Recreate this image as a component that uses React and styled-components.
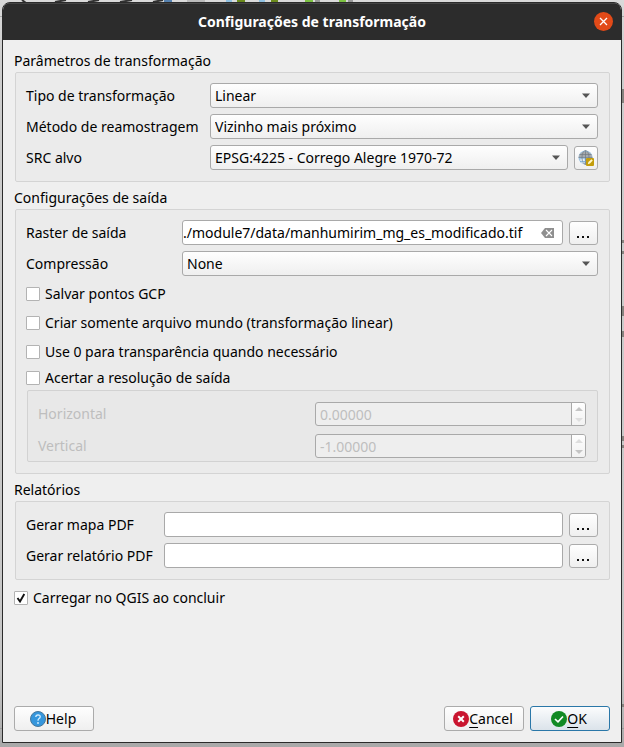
import React, { useEffect, useRef } from "react";
import styled, { createGlobalStyle, css } from "styled-components";

const GlobalStyle = createGlobalStyle`
  *, *::before, *::after { box-sizing: border-box; }
  body { margin: 0; background: #c9c9c9; }
  body, input, select, button {
    font-family: "Noto Sans", "Open Sans", sans-serif;
    font-size: 14px;
    line-height: 20px;
    color: #000;
  }
`;

const Desktop = styled.div`
  position: relative;
  display: flex;
  min-height: 100vh;
  padding: 2px 2px 4px;
  background: linear-gradient(#dadada 0, #cdcdcd 60px, #c6c6c6 90%, #a9a9a9 100%);
`;

const Backdrop = styled.svg`
  position: absolute;
  inset: 0;
  width: 100%;
  height: 100%;
`;

const Dialog = styled.main`
  position: relative;
  flex: 1;
  min-width: 0;
  display: flex;
  flex-direction: column;
  border: 1px solid #2b2b2b;
  border-radius: 8px 8px 0 0;
  background: #efefef;
  overflow: hidden;
`;

const TitleBar = styled.header`
  display: grid;
  grid-template-columns: 1fr auto 1fr;
  align-items: center;
  height: 37px;
  padding: 0 8px;
  background: #2c2c2c;
  border-top: 1px solid #444;
`;

const Title = styled.h1`
  grid-column: 2;
  margin: 0;
  font-size: 14px;
  line-height: 20px;
  font-weight: 700;
  color: #fff;
`;

const CloseButton = styled.button`
  justify-self: end;
  display: grid;
  place-items: center;
  width: 19px;
  height: 19px;
  margin-bottom: 2px;
  padding: 0;
  border: 0;
  border-radius: 50%;
  background: #e24a18;
`;

const Form = styled.form`
  flex: 1;
  display: flex;
  flex-direction: column;
  padding: 11px 11px;
`;

const Section = styled.section`
  margin-bottom: 6px;
`;

const SectionTitle = styled.h2`
  margin: 0;
  font-size: 14px;
  line-height: 20px;
  font-weight: 400;
`;

const Group = styled.div`
  display: flex;
  flex-direction: column;
  gap: 6px;
  margin: 1px 0 0 1px;
  padding: 10px 11px 11px 10px;
  border: 1px solid #d4d4d4;
  border-radius: 2px;
  background: #ebebeb;
`;

const Row = styled.div`
  display: grid;
  grid-template-columns: ${(p) => p.$label}px minmax(0, 1fr) auto;
  align-items: center;
  min-height: 25px;
`;

const fieldFrame = css`
  width: 100%;
  height: 25px;
  margin: 0;
  border: 1px solid #a9a9a9;
  border-radius: 3px;
`;

const SelectFrame = styled.div`
  display: grid;
  grid-template-columns: minmax(0, 1fr) 16px;
  align-items: center;
`;

const Select = styled.select`
  ${fieldFrame}
  grid-area: 1 / 1 / 2 / 3;
  appearance: none;
  padding: 0 20px 0 4px;
  background: linear-gradient(#fefefe, #efefef);
`;

const Arrow = styled.svg`
  grid-area: 1 / 2;
  z-index: 1;
  width: 8px;
  height: 5px;
  pointer-events: none;
`;

const InputFrame = styled.div`
  ${fieldFrame}
  display: flex;
  align-items: center;
  background: #fff;
  overflow: hidden;
`;

const TextInput = styled.input`
  flex: 1;
  min-width: 0;
  height: 23px;
  padding: 0;
  border: 0;
  background: transparent;
  outline: 0;
`;

const ClearButton = styled.button`
  display: flex;
  margin: 0 8px;
  padding: 0;
  border: 0;
  background: none;
`;

const SmallButton = styled.button`
  display: grid;
  place-items: center;
  width: ${(p) => p.$width}px;
  height: 24px;
  margin-left: 6px;
  padding: 0;
  border: 1px solid #ababab;
  border-radius: 3px;
  background: linear-gradient(#fefefe, #efefef);
`;

const Checks = styled.div`
  display: flex;
  flex-direction: column;
  gap: 9px;
  padding-top: 2px;
`;

const CheckLabel = styled.label`
  display: flex;
  align-items: center;
  gap: 5px;
`;

const CheckCell = styled.span`
  display: grid;
  place-items: center;
`;

const CheckInput = styled.input`
  grid-area: 1 / 1;
  appearance: none;
  width: 14px;
  height: 14px;
  margin: 0;
  border: 1px solid #b3b3b3;
  border-radius: 1px;
  background: #fff;
  & + svg { display: none; }
  &:checked + svg { display: block; }
`;

const CheckMark = styled.svg`
  grid-area: 1 / 1;
  z-index: 1;
  pointer-events: none;
`;

const SubGroup = styled.fieldset`
  display: flex;
  flex-direction: column;
  gap: 8px;
  min-width: 0;
  margin: -4px 0 0 1px;
  padding: 11px 11px 3px 10px;
  border: 1px solid #d2d2d2;
  border-radius: 2px;
  background: #e8e8e8;
  color: #bebebe;
`;

const SpinRow = styled.div`
  display: grid;
  grid-template-columns: minmax(0, 277fr) minmax(0, 271fr);
  align-items: center;
`;

const SpinFrame = styled.div`
  display: grid;
  grid-template-columns: minmax(0, 1fr) 14px;
  height: 24px;
  border: 1px solid #a9a9a9;
  border-radius: 3px;
  background: #eee;
  overflow: hidden;
`;

const SpinInput = styled.input`
  min-width: 0;
  height: 22px;
  padding: 0 4px;
  border: 0;
  background: transparent;
  color: #bebebe;
`;

const Stepper = styled.div`
  display: grid;
  grid-template-rows: 1fr 1fr;
  border-left: 1px solid #a9a9a9;
  background: linear-gradient(#fefefe, #f2f2f2);
`;

const Step = styled.button`
  display: grid;
  place-items: center;
  padding: 0;
  border: 0;
  background: none;
  color: ${(p) => (p.$faint ? "#dedede" : "#c4c4c4")};
`;

const FinalOption = styled.div`
  padding-top: 2px;
`;

const Footer = styled.footer`
  display: flex;
  gap: 6px;
  margin-top: auto;
`;

const ActionButton = styled.button`
  display: flex;
  align-items: center;
  justify-content: center;
  width: 80px;
  height: 25px;
  padding: 0 2px 0 0;
  margin-right: ${(p) => (p.$pushRest ? "auto" : "0")};
  border: 1px solid ${(p) => (p.$primary ? "#2a77a8" : "#ababab")};
  border-radius: 3px;
  background: ${(p) =>
    p.$primary ? "linear-gradient(#fbfcfd, #dbe3ea)" : "linear-gradient(#fefefe, #efefef)"};
`;

const Mnemonic = styled.span`
  text-decoration: underline;
  text-underline-offset: 3px;
`;

function ComboRow({ id, label, labelWidth, value, children }) {
  return (
    <Row $label={labelWidth}>
      <label htmlFor={id}>{label}</label>
      <SelectFrame>
        <Select id={id} defaultValue={value}>
          <option>{value}</option>
        </Select>
        <Arrow viewBox="0 0 8 5" aria-hidden="true">
          <path d="M0 0.5H8L4 5Z" fill="#555" />
        </Arrow>
      </SelectFrame>
      {children}
    </Row>
  );
}

function FileRow({ id, label, labelWidth, value = "", clearable }) {
  const ref = useRef(null);
  useEffect(() => {
    ref.current.scrollLeft = ref.current.scrollWidth;
  }, []);
  return (
    <Row $label={labelWidth}>
      <label htmlFor={id}>{label}</label>
      <InputFrame>
        <TextInput id={id} ref={ref} defaultValue={value} />
        {clearable && (
          <ClearButton type="button" aria-label="Limpar">
            <svg width="13" height="10" viewBox="0 0 13 10">
              <path d="M4 0H13V10H4L0 5Z" fill="#8f8f8f" />
              <path d="M5 2L11 8M11 2L5 8" stroke="#fff" strokeWidth="1.1" />
            </svg>
          </ClearButton>
        )}
      </InputFrame>
      <SmallButton type="button" $width={29} aria-label={`Procurar: ${label}`}>
        <svg width="13" height="12" viewBox="0 0 13 12" fill="#111">
          <rect x="0" y="9" width="2" height="2" />
          <rect x="5" y="9" width="2" height="2" />
          <rect x="10" y="9" width="2" height="2" />
        </svg>
      </SmallButton>
    </Row>
  );
}

function Check({ label, checked }) {
  return (
    <CheckLabel>
      <CheckCell>
        <CheckInput type="checkbox" defaultChecked={checked} />
        <CheckMark width="10" height="10" viewBox="0 0 10 10" aria-hidden="true">
          <path d="M1.5 5L4 8.5L8.3 1" fill="none" stroke="#111" strokeWidth="1.9" />
        </CheckMark>
      </CheckCell>
      {label}
    </CheckLabel>
  );
}

function Spin({ id, label, value, faintUp }) {
  return (
    <SpinRow>
      <label htmlFor={id}>{label}</label>
      <SpinFrame>
        <SpinInput id={id} defaultValue={value} />
        <Stepper>
          <Step type="button" $faint={faintUp} aria-label="Aumentar">
            <svg width="8" height="4" viewBox="0 0 8 4"><path d="M0 4H8L4 0Z" fill="currentColor" /></svg>
          </Step>
          <Step type="button" $faint={!faintUp} aria-label="Diminuir">
            <svg width="8" height="4" viewBox="0 0 8 4"><path d="M0 0H8L4 4Z" fill="currentColor" /></svg>
          </Step>
        </Stepper>
      </SpinFrame>
    </SpinRow>
  );
}

function GlobeIcon() {
  return (
    <svg width="16" height="16" viewBox="0 0 16 16" aria-hidden="true">
      <circle cx="7.5" cy="7.5" r="7" fill="#9fc4e3" />
      <path d="M0.7 7A7 7 0 0 1 14.3 7Z" fill="#a5aaae" />
      <path d="M3 9Q6 8 7 10L6 14Q3 13 2 10Z" fill="#e1edf6" />
      <g fill="none" stroke="#717a82" strokeWidth="0.7">
        <path d="M0.5 7.5H14.5M1.5 4.5H13.5M7.5 0.5V14.5" />
        <ellipse cx="7.5" cy="7.5" rx="3.5" ry="7" />
        <path d="M2 11.5H13" stroke="#6fa1cc" />
      </g>
      <rect x="8" y="8" width="8" height="8" rx="1" fill="#c39d0c" />
      <path d="M9.8 14.2L10.4 12L13.5 9.3L14.8 10.5L12 13.6Z" fill="#fff6c7" />
    </svg>
  );
}

function HelpIcon() {
  return (
    <svg width="16" height="16" viewBox="0 0 16 16" aria-hidden="true">
      <circle cx="8" cy="8" r="7.5" fill="#3596dc" stroke="#46779b" />
      <path d="M5.8 6Q5.9 3.8 8 3.8Q10.3 3.9 10.2 5.9Q10.1 7 8.8 7.8Q8 8.3 8 9.7" fill="none" stroke="#d5efff" strokeWidth="1.3" />
      <circle cx="8" cy="12" r="0.9" fill="#d5efff" />
    </svg>
  );
}

function CancelIcon() {
  return (
    <svg width="16" height="16" viewBox="0 0 16 16" aria-hidden="true">
      <circle cx="8" cy="8" r="8" fill="#c9152f" />
      <path d="M5.2 5.2L10.8 10.8M10.8 5.2L5.2 10.8" stroke="#fff" strokeWidth="2" />
    </svg>
  );
}

function OkIcon() {
  return (
    <svg width="16" height="16" viewBox="0 0 16 16" aria-hidden="true">
      <circle cx="8" cy="8" r="8" fill="#128a24" />
      <path d="M4 8L7 10.8L12 5.5" fill="none" stroke="#fff" strokeWidth="1.7" />
    </svg>
  );
}

function DesktopBehind() {
  return (
    <Backdrop aria-hidden="true">
      <g fill="none" strokeWidth="2">
        <path d="M22 0L26 3M55 2L66 0M88 2L99 0M120 2L132 0M153 2L163 0" stroke="#333" />
        <path d="M164 1H172" stroke="#5682b0" />
        <path d="M187 1H205" stroke="#bbb" />
        <path d="M237 1H245M271 1H278" stroke="#6b8a1c" />
        <path d="M226 1H232M259 1H265" stroke="#8fc0e0" />
        <path d="M305 1H313M339 1H346" stroke="#7cc142" />
        <path d="M315 1H320M348 1H353" stroke="#999" />
      </g>
      <path d="M0 16.5H624" stroke="#aaa" />
      <path d="M0 728.5H624" stroke="#9a9a9a" />
      <g fill="#86827e">
        <rect x="621" y="89" width="3" height="14" />
        <rect x="621" y="240" width="3" height="3" />
        <rect x="621" y="251" width="3" height="3" />
        <rect x="621" y="306" width="3" height="10" />
        <rect x="621" y="331" width="3" height="6" />
        <rect x="621" y="436" width="3" height="5" />
        <rect x="621" y="445" width="3" height="3" />
        <rect x="621" y="704" width="3" height="3" />
      </g>
    </Backdrop>
  );
}

export default function App() {
  return (
    <Desktop>
      <GlobalStyle />
      <DesktopBehind />
      <Dialog>
        <TitleBar>
          <Title>Configurações de transformação</Title>
          <CloseButton type="button" aria-label="Fechar">
            <svg width="9" height="9" viewBox="0 0 9 9">
              <path d="M1 1L8 8M8 1L1 8" stroke="#fff" strokeWidth="1.3" />
            </svg>
          </CloseButton>
        </TitleBar>
        <Form onSubmit={(e) => e.preventDefault()}>
          <Section>
            <SectionTitle>Parâmetros de transformação</SectionTitle>
            <Group>
              <ComboRow id="type" label="Tipo de transformação" labelWidth={184} value="Linear" />
              <ComboRow id="method" label="Método de reamostragem" labelWidth={184} value="Vizinho mais próximo" />
              <ComboRow id="crs" label="SRC alvo" labelWidth={184} value="EPSG:4225 - Corrego Alegre 1970-72">
                <SmallButton type="button" $width={24} aria-label="Selecionar SRC">
                  <GlobeIcon />
                </SmallButton>
              </ComboRow>
            </Group>
          </Section>
          <Section>
            <SectionTitle>Configurações de saída</SectionTitle>
            <Group>
              <FileRow id="raster" label="Raster de saída" labelWidth={156} value="./module7/data/manhumirim_mg_es_modificado.tif" clearable />
              <ComboRow id="compression" label="Compressão" labelWidth={156} value="None" />
              <Checks>
                <Check label="Salvar pontos GCP" />
                <Check label="Criar somente arquivo mundo (transformação linear)" />
                <Check label="Use 0 para transparência quando necessário" />
              </Checks>
              <Check label="Acertar a resolução de saída" />
              <SubGroup disabled>
                <Spin id="horizontal" label="Horizontal" value="0.00000" />
                <Spin id="vertical" label="Vertical" value="-1.00000" faintUp />
              </SubGroup>
            </Group>
          </Section>
          <Section>
            <SectionTitle>Relatórios</SectionTitle>
            <Group>
              <FileRow id="map" label="Gerar mapa PDF" labelWidth={138} />
              <FileRow id="report" label="Gerar relatório PDF" labelWidth={138} />
            </Group>
          </Section>
          <FinalOption>
            <Check label="Carregar no QGIS ao concluir" checked />
          </FinalOption>
          <Footer>
            <ActionButton type="button" $pushRest>
              <HelpIcon />
              <span>Help</span>
            </ActionButton>
            <ActionButton type="button">
              <CancelIcon />
              <span><Mnemonic>C</Mnemonic>ancel</span>
            </ActionButton>
            <ActionButton type="submit" $primary>
              <OkIcon />
              <span><Mnemonic>O</Mnemonic>K</span>
            </ActionButton>
          </Footer>
        </Form>
      </Dialog>
    </Desktop>
  );
}
